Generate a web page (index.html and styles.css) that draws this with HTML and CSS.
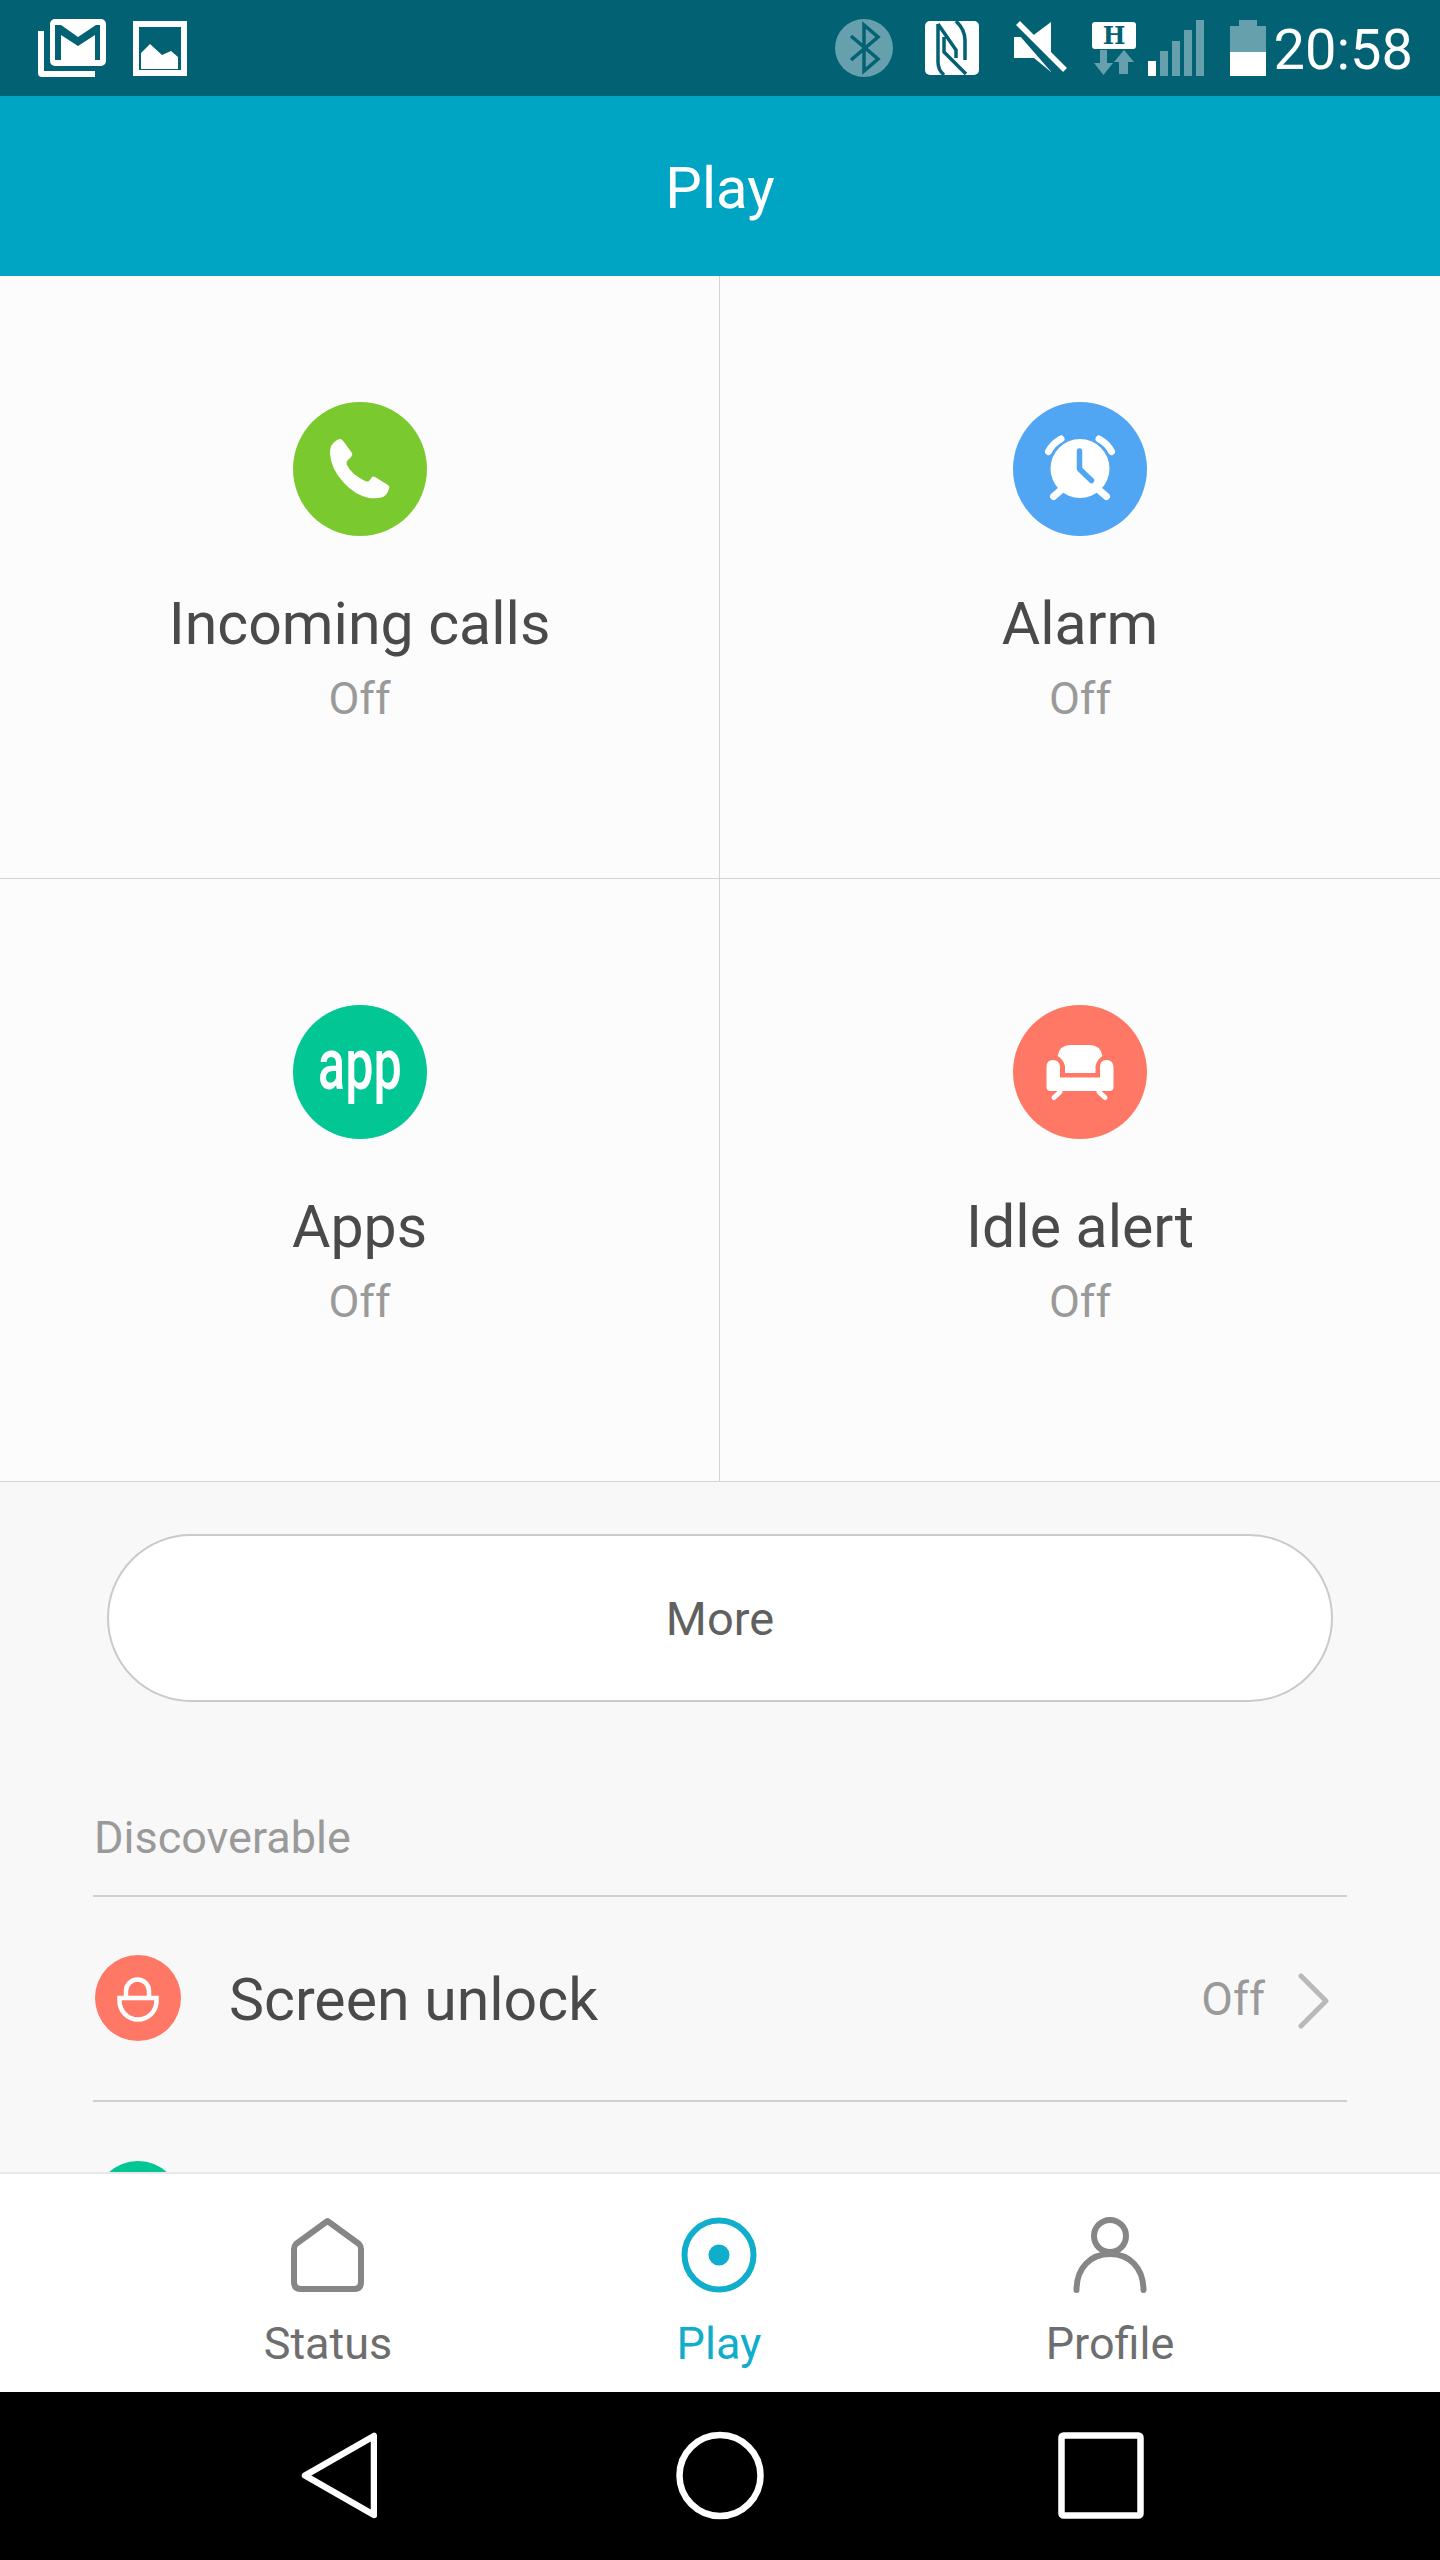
FILE: index.html
```html
<!DOCTYPE html>
<html lang="en">

<head>
    <title>Play</title>
    <meta charset="UTF-8">
    <meta name="viewport" content="width=device-width, initial-scale=1">
    <link rel="stylesheet" href="styles.css">
</head>

<body>
    <main class="phone">
        <!-- status bar -->
        <div class="statusBar">
            <svg class="gmailIcon" width="68" height="96" viewBox="38 0 68 96">
                <path class="white" d="M38 31h6v40h51v6H42q-4 0-4-4z" />
                <rect class="white" x="50" y="19" width="56" height="47" rx="5" />
                <path class="dark" d="M55 25h6l17 12 18-12h4v35h-5V35L78 46 61 35v25h-6z" />
            </svg>
            <svg class="photoIcon" width="54" height="96" viewBox="133 0 54 96">
                <rect class="white" x="133" y="21" width="54" height="55" />
                <rect class="dark" x="139" y="27" width="42" height="43" />
                <path class="white" d="M141 53l9-9 12 11 9-4 7 6v12h-37z" />
            </svg>
            <div class="statusSpacer"></div>
            <svg width="58" height="96" viewBox="834 0 58 96">
                <ellipse class="dim" cx="863" cy="48" rx="29" ry="29" />
                <path class="btLine" d="M850 36l27 23-14 12V25l14 12-27 23" />
            </svg>
            <svg class="nfcIcon" width="54" height="96" viewBox="924 0 54 96">
                <rect class="white" x="924" y="21" width="54" height="54" rx="5" />
                <path class="nfcLine" d="M937 24v38q0 8 6 13M937 24l18 26v8M943 37v15l22 22M955 21q9 9 9 19v20" />
            </svg>
            <svg class="muteIcon" width="53" height="96" viewBox="1013 0 53 96">
                <path class="white" d="M1013 37h17l20-15v50l-17-14h-20z" />
                <path class="muteGap" d="M1014 22l47 54" />
                <path class="muteSlash" d="M1017 23l47 47" />
            </svg>
            <svg class="netIcon" width="44" height="96" viewBox="1091 0 44 96">
                <rect class="white" x="1091" y="22" width="44" height="27" rx="3" />
                <text class="netLetter" x="1113" y="44" text-anchor="middle">H</text>
                <path class="dim" d="M1099 50h7v13h6l-9.500 12-9.500-12h6zM1118 74V62h-5l10-12 10 12h-6v12z" />
            </svg>
            <svg class="signalIcon" width="56" height="96" viewBox="1147 0 56 96">
                <rect class="white" x="1147" y="61" width="8" height="15" />
                <rect class="dim" x="1159" y="51" width="8" height="25" />
                <rect class="dim" x="1171" y="41" width="8" height="35" />
                <rect class="dim" x="1183" y="30" width="8" height="46" />
                <rect class="dim" x="1195" y="20" width="8" height="56" />
            </svg>
            <svg class="batteryIcon" width="36" height="96" viewBox="1229 0 36 96">
                <path class="dim" d="M1238 20h18v6h9v26h-36V26h9z" />
                <rect class="white" x="1229" y="52" width="36" height="24" />
            </svg>
            <span class="clock">20:58</span>
        </div>

        <header class="appBar">Play</header>

        <div class="content">
            <section class="tiles">
                <div class="tile">
                    <svg class="tileIcon" viewBox="0 0 134 134">
                        <circle class="green" cx="67" cy="67" r="67" />
                        <path class="white" d="M38 44q4-6 9-7 2 0 4 3l8 11q1 2-1 4l-4 4q-1 2 0 4 4 9 18 16 3 1 4 0l3-4q1-1 3 0l13 8q2 1 1 4-2 6-6 8-6 2-14 1-14-3-25-15-13-14-14-29 0-5 1-8z" />
                    </svg>
                    <div class="tileName">Incoming calls</div>
                    <div class="tileState">Off</div>
                </div>
                <div class="tile">
                    <svg class="tileIcon" viewBox="0 0 134 134">
                        <circle class="blue" cx="67" cy="67" r="67" />
                        <circle class="white" cx="67" cy="66.500" r="29.500" />
                        <path class="alarmBell" d="M35.500 49.500q4-8 12.500-12.500M86 37q8.500 4.500 12.500 12.500M40.500 94.500l7.500-6.500M93.500 94.500l-7.500-6.500" />
                        <path class="alarmHand" d="M66.500 49v18l12 11.500" />
                    </svg>
                    <div class="tileName">Alarm</div>
                    <div class="tileState">Off</div>
                </div>
                <div class="tile">
                    <svg class="tileIcon" viewBox="0 0 134 134">
                        <circle class="teal" cx="67" cy="67" r="67" />
                        <text class="appLetters" transform="translate(67 84) scale(.7 1)" text-anchor="middle">app</text>
                    </svg>
                    <div class="tileName">Apps</div>
                    <div class="tileState">Off</div>
                </div>
                <div class="tile">
                    <svg class="tileIcon" viewBox="0 0 134 134">
                        <circle class="coral" cx="67" cy="67" r="67" />
                        <path class="white" d="M44.500 51q2-11 13-11h19q11 0 13 11-5 3-7 10v7H52v-7q-2-7-7.500-10z" />
                        <path class="white" d="M33.500 62q0-7 6.500-7t7 7v10.500h40V62q0-7 6.500-7t7 7v20q0 4-4 4H37.500q-4 0-4-4z" />
                        <path class="sofaLeg" d="M41 92.500l6-5.500M92 92.500l-6-5.500" />
                    </svg>
                    <div class="tileName">Idle alert</div>
                    <div class="tileState">Off</div>
                </div>
            </section>

            <button class="moreBtn">More</button>

            <section class="settings">
                <h2 class="settingsTitle">Discoverable</h2>
                <div class="settingRow">
                    <svg class="rowIcon" viewBox="0 0 86 86">
                        <circle class="coral" cx="43" cy="43" r="43" />
                        <path class="lockLine" d="M31 43v-7a11.500 11.500 0 0 1 23 0v7M24.500 43h37v3a18.500 18.500 0 0 1-37 0z" />
                    </svg>
                    <span class="rowName">Screen unlock</span>
                    <span class="rowState">Off</span>
                    <svg class="chevron" width="32" height="56" viewBox="0 0 32 56">
                        <path d="M3 3l25 25L3 53" />
                    </svg>
                </div>
                <div class="settingRow">
                    <svg class="rowIcon" viewBox="0 0 86 86">
                        <circle class="teal" cx="43" cy="43" r="43" />
                    </svg>
                </div>
            </section>
        </div>

        <nav class="tabBar">
            <a class="tab">
                <svg class="tabIcon" width="76" height="78" viewBox="290 2216 76 78">
                    <path d="M327.500 2221L359 2244q2 2 2 5v33q0 7-7 7h-53q-7 0-7-7v-33q0-3 2-5z" />
                </svg>
                <span>Status</span>
            </a>
            <a class="tab active">
                <svg class="tabIcon" width="76" height="78" viewBox="681 2216 76 78">
                    <circle cx="719" cy="2255" r="34.500" />
                    <circle class="tabDot" cx="719" cy="2255" r="10.500" />
                </svg>
                <span>Play</span>
            </a>
            <a class="tab">
                <svg class="tabIcon" width="76" height="78" viewBox="1073 2216 76 78">
                    <circle cx="1111" cy="2236" r="16" />
                    <path d="M1077.500 2290c0-22 14-36 33.500-36s33.500 14 33.500 36" />
                </svg>
                <span>Profile</span>
            </a>
        </nav>

        <div class="softKeys">
            <svg class="softBack" width="76" height="168" viewBox="301 2392 76 168">
                <path d="M374 2436v79l-69-39.500z" />
            </svg>
            <svg class="softHome" width="88" height="168" viewBox="676 2392 88 168">
                <circle cx="720" cy="2475.500" r="40.500" />
            </svg>
            <svg class="softRecent" width="86" height="168" viewBox="1058 2392 86 168">
                <rect x="1061.500" y="2435.500" width="79" height="80" rx="2" />
            </svg>
        </div>
    </main>
</body>

</html>
```

FILE: styles.css
```css
* {
    box-sizing: border-box;
}

body {
    margin: 0;
    background-color: #000;
    font-family: Roboto, "Liberation Sans", sans-serif;
}

svg {
    display: block;
    flex-shrink: 0;
}

.phone {
    width: 1440px;
    height: 2560px;
    display: flex;
    flex-direction: column;
    overflow: hidden;
}

/* shared icon fills */
.white {
    fill: #fff;
}

.dark {
    fill: #026172;
}

.dim {
    fill: #66a0ad;
}

.green {
    fill: #7ac92f;
}

.blue {
    fill: #50a6f3;
}

.teal {
    fill: #03c695;
}

.coral {
    fill: #ff7866;
}

/* status bar */
.statusBar {
    height: 96px;
    flex-shrink: 0;
    display: flex;
    padding: 0 27px 0 38px;
    background-color: #026172;
}

.photoIcon {
    margin-left: 27px;
}

.statusSpacer {
    flex: 1;
}

.nfcIcon {
    margin-left: 32px;
}

.muteIcon {
    margin-left: 35px;
}

.netIcon {
    margin-left: 25px;
}

.signalIcon {
    margin-left: 12px;
}

.batteryIcon {
    margin-left: 26px;
}

.btLine {
    fill: none;
    stroke: #026172;
    stroke-width: 3.500;
}

.nfcLine {
    fill: none;
    stroke: #026172;
    stroke-width: 3.500;
}

.muteGap {
    fill: none;
    stroke: #026172;
    stroke-width: 11;
}

.muteSlash {
    fill: none;
    stroke: #fff;
    stroke-width: 5.500;
}

.netLetter {
    font-family: "DejaVu Serif", serif;
    font-weight: 700;
    font-size: 24px;
    fill: #026172;
}

.clock {
    margin-left: 8px;
    font-size: 56px;
    line-height: 100px;
    color: #fff;
}

/* title */
.appBar {
    height: 180px;
    flex-shrink: 0;
    background-color: #00a5c3;
    color: #fff;
    font-size: 58px;
    font-weight: 400;
    line-height: 184px;
    text-align: center;
}

.content {
    flex: 1;
    min-height: 0;
    overflow: hidden;
    background-color: #f8f8f8;
}

/* 2x2 tiles */
.tiles {
    display: grid;
    grid-template-columns: 720px 720px;
    grid-template-rows: 603px 602px;
    background-color: #fcfcfc;
    border-bottom: 1px solid #d4d4d4;
}

.tile {
    display: flex;
    flex-direction: column;
    align-items: center;
    padding-top: 126px;
    border-bottom: 1px solid #d4d4d4;
}

.tile:nth-child(odd) {
    border-right: 1px solid #d4d4d4;
}

.tile:nth-child(n+3) {
    border-bottom: 0;
}

.tileIcon {
    width: 134px;
    height: 134px;
}

.tileName {
    margin-top: 50px;
    font-size: 59px;
    line-height: 76px;
    color: #4a4a4a;
}

.tileState {
    margin-top: 9px;
    font-size: 45px;
    line-height: 56px;
    color: #9a9a9a;
}

.alarmBell {
    fill: none;
    stroke: #fff;
    stroke-width: 7;
    stroke-linecap: round;
}

.alarmHand {
    fill: none;
    stroke: #50a6f3;
    stroke-width: 5.500;
    stroke-linecap: round;
    stroke-linejoin: round;
}

.appLetters {
    font-family: Roboto, sans-serif;
    font-weight: 500;
    font-size: 72px;
    fill: #fff;
}

.sofaLeg {
    fill: none;
    stroke: #fff;
    stroke-width: 5;
    stroke-linecap: round;
}

/* more button */
.moreBtn {
    display: block;
    width: 1226px;
    height: 168px;
    margin: 52px 0 0 107px;
    padding: 0;
    border: 2px solid #cacaca;
    border-radius: 84px;
    background-color: #fff;
    font-family: inherit;
    font-size: 47px;
    color: #606060;
}

/* list */
.settings {
    margin: 0 93px;
}

.settingsTitle {
    margin: 0;
    padding: 106px 0 0 1px;
    height: 195px;
    font-size: 45px;
    font-weight: 400;
    line-height: 60px;
    color: #9a9a9a;
    border-bottom: 2px solid #d0d0d0;
}

.settingRow {
    height: 205px;
    display: flex;
    align-items: center;
    border-bottom: 2px solid #d0d0d0;
    padding: 0 0 2px 2px;
}

.settingRow:last-child {
    border-bottom: 0;
}

.rowIcon {
    width: 86px;
    height: 86px;
}

.rowName {
    flex: 1;
    margin-left: 48px;
    padding-top: 4px;
    font-size: 59px;
    color: #4a4a4a;
}

.rowState {
    padding-top: 2px;
    font-size: 46px;
    color: #9a9a9a;
}

.chevron {
    margin: 6px 17px 0 33px;
}

.chevron path {
    fill: none;
    stroke: #b9b9b9;
    stroke-width: 5;
    stroke-linecap: round;
    stroke-linejoin: round;
}

.lockLine {
    fill: none;
    stroke: #fff;
    stroke-width: 4.500;
}

/* bottom tabs */
.tabBar {
    height: 220px;
    flex-shrink: 0;
    display: flex;
    justify-content: center;
    padding-right: 2px;
    background-color: #fff;
    border-top: 2px solid #e8e8e8;
}

.tab {
    width: 391px;
    display: flex;
    flex-direction: column;
    align-items: center;
    padding-top: 42px;
    font-size: 45px;
    line-height: 56px;
    color: #6e6e6e;
}

.tab span {
    margin-top: 22px;
}

.tabIcon circle,
.tabIcon path {
    fill: none;
    stroke: #868686;
    stroke-width: 6;
    stroke-linecap: round;
    stroke-linejoin: round;
}

.tab.active {
    color: #10aecb;
}

.tab.active circle {
    stroke: #10aecb;
}

.tab.active .tabDot {
    fill: #10aecb;
    stroke: none;
}

/* android keys */
.softKeys {
    height: 168px;
    flex-shrink: 0;
    display: flex;
    padding-left: 301px;
    background-color: #000;
}

.softKeys path,
.softKeys circle,
.softKeys rect {
    fill: none;
    stroke: #fff;
    stroke-width: 6.500;
    stroke-linejoin: round;
}

.softHome {
    margin-left: 299px;
}

.softRecent {
    margin-left: 294px;
}
```
